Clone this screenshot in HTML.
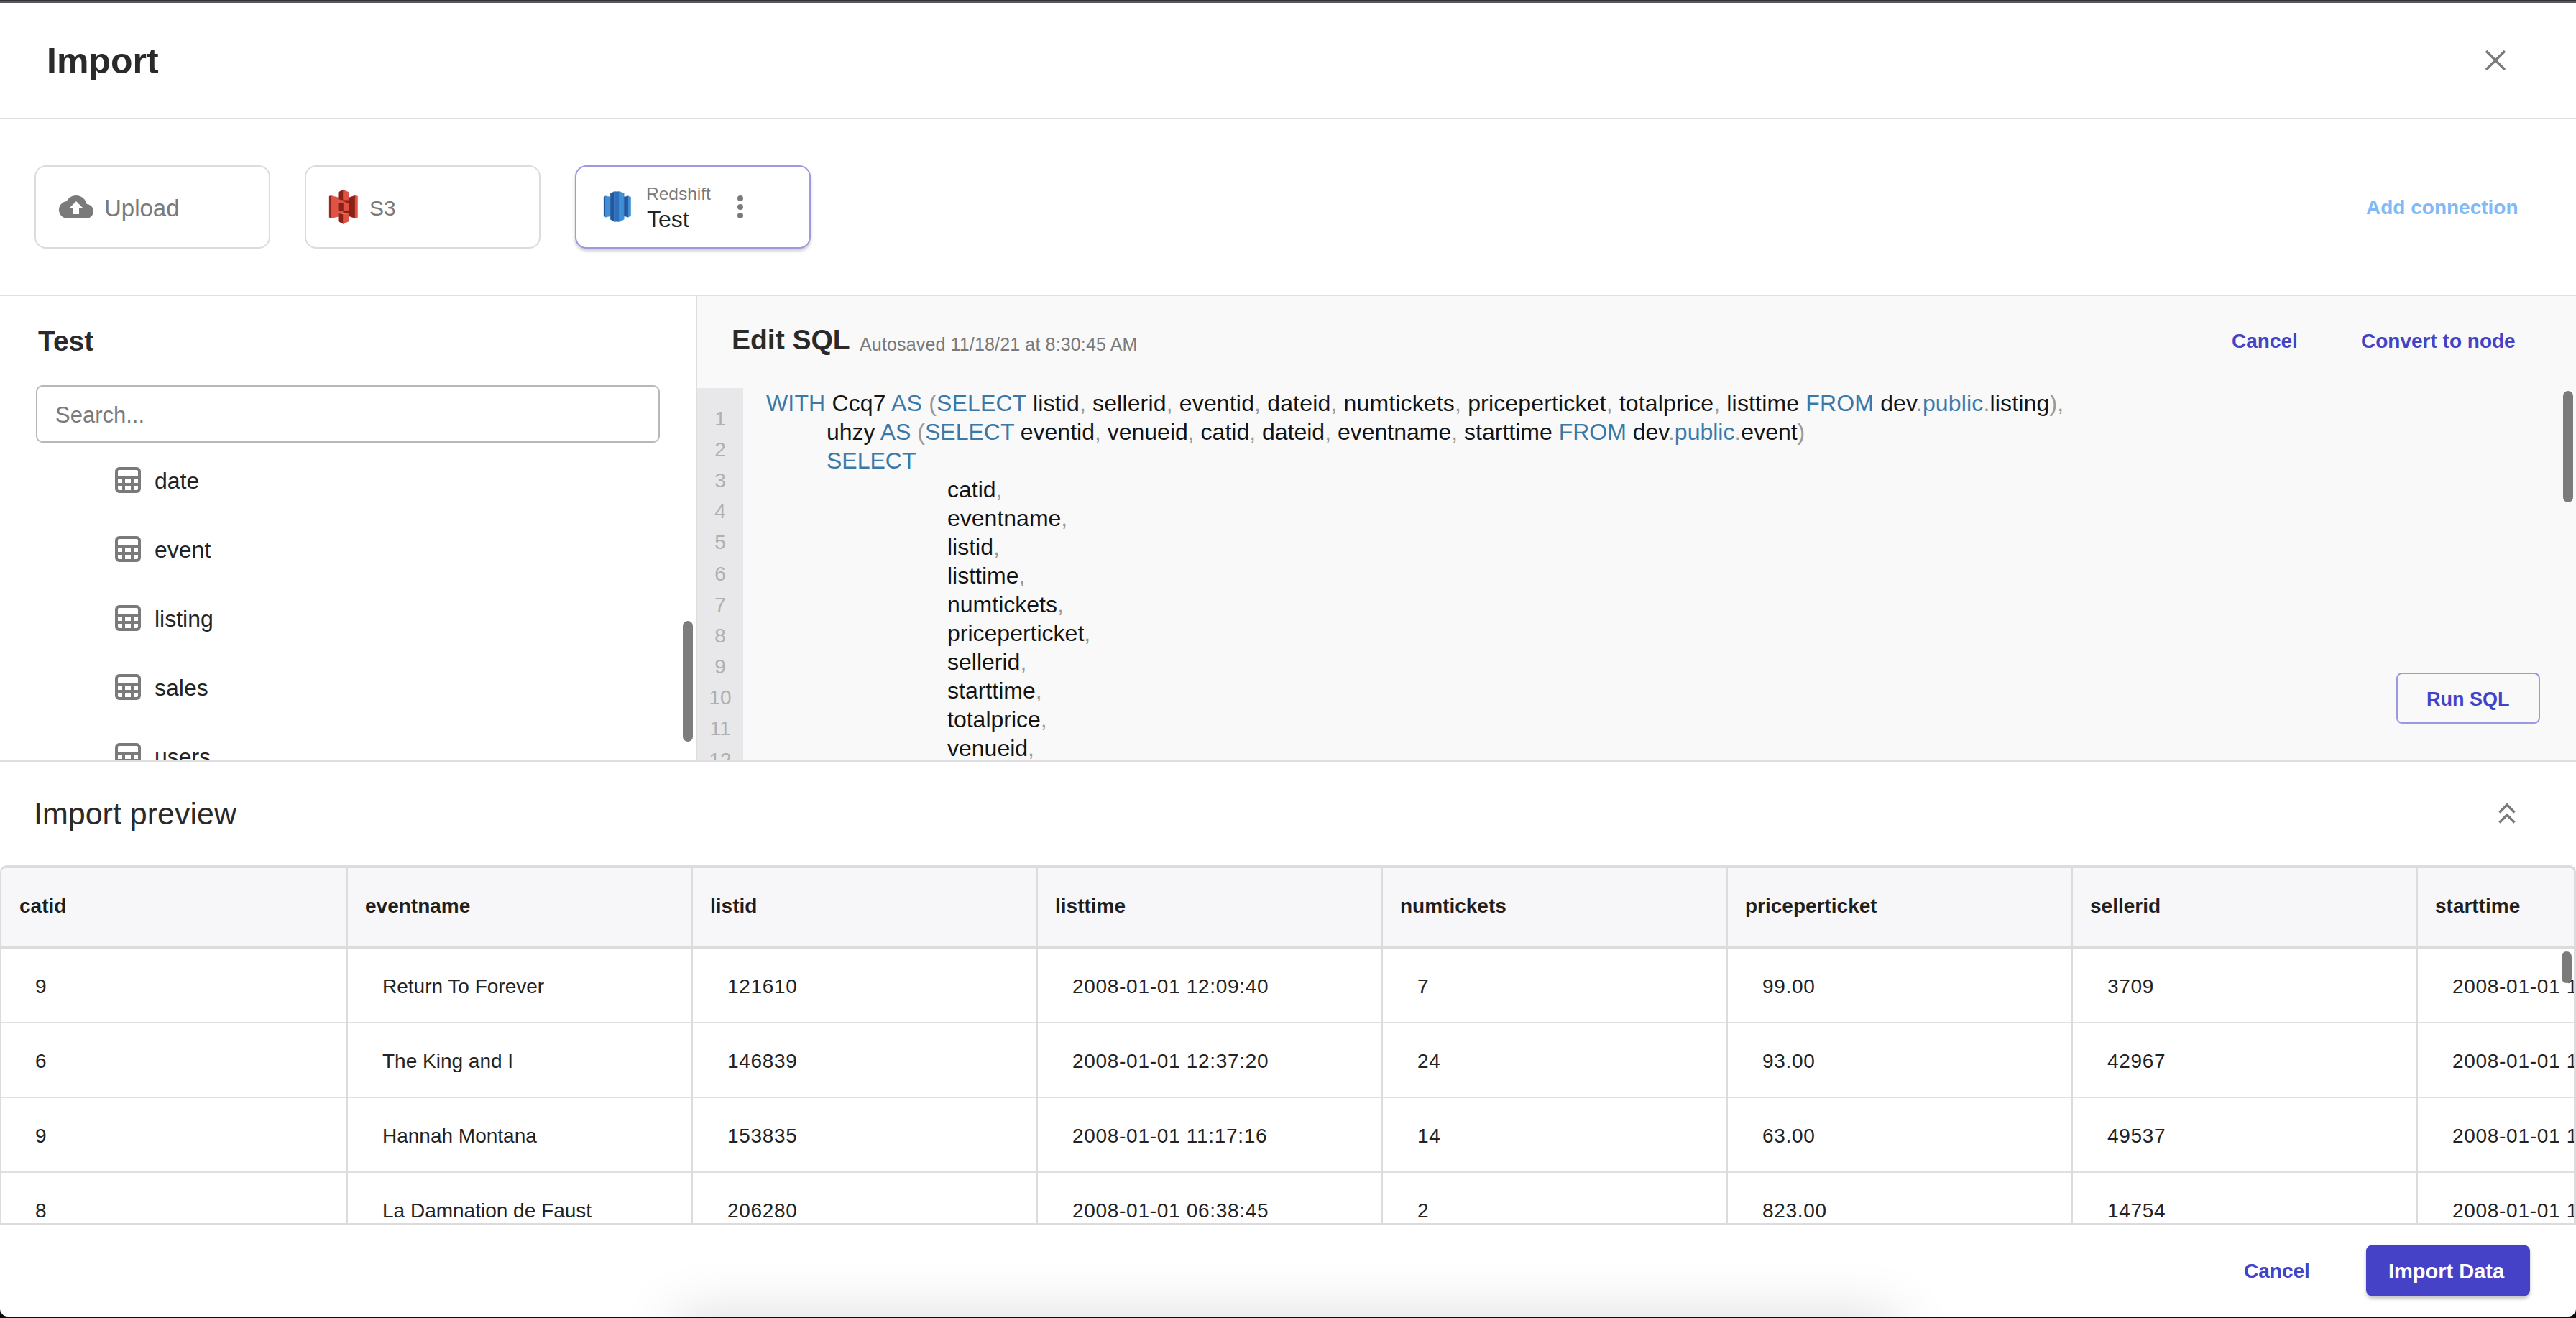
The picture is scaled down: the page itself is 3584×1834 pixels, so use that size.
<!DOCTYPE html>
<html><head><meta charset="utf-8"><style>
html,body{margin:0;padding:0;width:3584px;height:1834px;overflow:hidden;background:#fff;font-family:"Liberation Sans", sans-serif}
.r{position:absolute}
.t{position:absolute;white-space:pre;font-family:"Liberation Sans", sans-serif}
</style></head><body>
<div class="r" style="left:0px;top:0px;width:3584px;height:2px;background:#333438"></div>
<div class="r" style="left:0px;top:2px;width:3584px;height:2px;background:#595a5f"></div>
<div class="r" style="left:0px;top:1822px;width:3584px;height:12px;background:#0b0c10"></div>
<div class="r" style="left:0px;top:1790px;width:3584px;height:42px;background:#fff;border-radius:0 0 11px 11px"></div>
<div class="r" style="left:0;top:1690px;width:3584px;height:142px;overflow:hidden;border-radius:0 0 11px 11px"><div class="r" style="left:935px;top:144px;width:1710px;height:60px;border-radius:30px;box-shadow:0 0 80px rgba(0,0,0,0.17)"></div></div>
<div class="t" style="left:65px;top:60px;font-size:50px;line-height:50px;font-weight:700;color:#2a2a2a;">Import</div>
<svg class="r" style="left:3454px;top:66px" width="36" height="36" viewBox="0 0 36 36"><path d="M5 5L31 31M31 5L5 31" stroke="#7a7a7a" stroke-width="3.6" stroke-linecap="butt"/></svg>
<div class="r" style="left:0px;top:164px;width:3584px;height:2px;background:#e0e0e0"></div>
<div class="r" style="left:48px;top:230px;width:328px;height:116px;border:2px solid #dcdcdc;border-radius:16px;box-sizing:border-box;background:#fff"></div>
<svg class="r" style="left:82px;top:264px" width="48" height="48" viewBox="0 0 24 24"><path fill="#7a7a7a" d="M19.35 10.04C18.67 6.59 15.64 4 12 4 9.11 4 6.6 5.64 5.35 8.04 2.34 8.36 0 10.91 0 14c0 3.31 2.69 6 6 6h13c2.76 0 5-2.24 5-5 0-2.64-2.05-4.78-4.65-4.96zM14 13v4h-4v-4H7l5-5 5 5h-3z"/></svg>
<div class="t" style="left:145px;top:273px;font-size:33px;line-height:33px;font-weight:400;color:#7a7a7a;">Upload</div>
<div class="r" style="left:424px;top:230px;width:328px;height:116px;border:2px solid #dcdcdc;border-radius:16px;box-sizing:border-box;background:#fff"></div>
<svg class="r" style="left:450px;top:258px" width="56" height="58" viewBox="0 0 56 58">
<polygon fill="#8a2116" stroke="#8a2116" stroke-width="0.35" points="8.1,15 10.8,14.3 10.8,45.8 8.1,44.6"/>
<polygon fill="#e05243" stroke="#e05243" stroke-width="0.35" points="10.8,14.3 20.7,16.7 20.7,43.5 10.8,45.8"/>
<polygon fill="#8a2116" stroke="#8a2116" stroke-width="0.35" points="35.2,17 44,14.1 44,45.8 35.2,42.7"/>
<polygon fill="#e05243" stroke="#e05243" stroke-width="0.35" points="44,14.1 47.6,15 47.6,44.6 44,45.8"/>
<polygon fill="#e05243" stroke="#e05243" stroke-width="0.35" points="20.7,19.6 35.2,19.6 35.2,38.8 20.7,38.8"/>
<polygon fill="#8a2116" stroke="#8a2116" stroke-width="0.35" points="20.7,24.6 27.7,24.6 27.7,35.2 20.7,35.2"/>
<polygon fill="#8a2116" stroke="#8a2116" stroke-width="0.35" points="27.7,19.8 35.2,20.5 35.2,24.6 27.7,22"/>
<polygon fill="#8a2116" stroke="#8a2116" stroke-width="0.35" points="27.7,35.2 35.2,35.2 35.2,38.8 27.7,38.8"/>
<polygon fill="#8a2116" stroke="#8a2116" stroke-width="0.35" points="20.7,9.5 27.7,5.9 27.7,20.2 20.7,19.4"/>
<polygon fill="#e05243" stroke="#e05243" stroke-width="0.35" points="27.7,5.9 35.2,9.5 35.2,20.2 27.7,20.2"/>
<polygon fill="#e88a7e" points="20.7,38.6 35.2,38.6 27.7,40.4"/>
<polygon fill="#8a2116" stroke="#8a2116" stroke-width="0.35" points="20.7,38.8 27.7,40.2 27.7,53.6 20.7,50"/>
<polygon fill="#e05243" stroke="#e05243" stroke-width="0.35" points="27.7,40.2 35.2,38.8 35.2,50 27.7,53.6"/>
</svg>
<div class="t" style="left:514px;top:275px;font-size:30px;line-height:30px;font-weight:400;color:#7a7a7a;">S3</div>
<div class="r" style="left:800px;top:230px;width:328px;height:116px;border:2px solid #9c98e2;border-radius:16px;box-sizing:border-box;background:#fff;box-shadow:0 3px 4px rgba(0,0,0,0.22)"></div>
<svg class="r" style="left:832px;top:260px" width="56" height="56" viewBox="0 0 56 56">
<polygon fill="#2058a0" stroke="#2058a0" stroke-width="0.35" points="8.1,14.3 10.6,12.7 10.6,42.3 8.1,40.3"/>
<polygon fill="#3f8fd4" stroke="#3f8fd4" stroke-width="0.35" points="10.6,12.7 17.3,14 17.3,40.8 10.6,42.3"/>
<polygon fill="#2058a0" stroke="#2058a0" stroke-width="0.35" points="17.2,9.3 22.5,6.6 22.5,48.4 17.2,45.3"/>
<polygon fill="#2d6fbd" stroke="#2d6fbd" stroke-width="0.35" points="22.5,6.6 29.8,6.6 29.8,48.4 22.5,48.4"/>
<polygon fill="#3f8fd4" stroke="#3f8fd4" stroke-width="0.35" points="29.7,6.6 30.3,6.6 36.3,9.3 36.3,45.3 30.3,48.4 29.7,48.4"/>
<polygon fill="#2058a0" stroke="#2058a0" stroke-width="0.35" points="36.2,14 42,12.7 42,42.3 36.2,40.8"/>
<polygon fill="#3f8fd4" stroke="#3f8fd4" stroke-width="0.35" points="42,12.7 45.7,14.3 45.7,40.3 42,42.3"/>
</svg>
<div class="t" style="left:899px;top:258px;font-size:24.5px;line-height:24.5px;font-weight:400;color:#7a7a7a;">Redshift</div>
<div class="t" style="left:900px;top:289px;font-size:32px;line-height:32px;font-weight:400;color:#232323;">Test</div>
<div class="r" style="left:1026px;top:272px;width:8px;height:8px;background:#7a7a7a;border-radius:50%"></div>
<div class="r" style="left:1026px;top:284px;width:8px;height:8px;background:#7a7a7a;border-radius:50%"></div>
<div class="r" style="left:1026px;top:296px;width:8px;height:8px;background:#7a7a7a;border-radius:50%"></div>
<div class="t" style="left:3292px;top:275px;font-size:28px;line-height:28px;font-weight:700;color:#80b9f6;">Add connection</div>
<div class="r" style="left:0px;top:410px;width:3584px;height:2px;background:#e0e0e0"></div>
<div class="t" style="left:53px;top:455px;font-size:39px;line-height:39px;font-weight:700;color:#2a2a2a;">Test</div>
<div class="r" style="left:50px;top:536px;width:868px;height:80px;border:2px solid #b8b8b8;border-radius:9px;box-sizing:border-box;background:#fff"></div>
<div class="t" style="left:77px;top:562px;font-size:31px;line-height:31px;font-weight:400;color:#7a7a7a;">Search...</div>
<div class="r" style="left:0;top:412px;width:968px;height:646px;overflow:hidden">
<div class="r" style="left:160px;top:238px;width:36px;height:36px"><svg width="36" height="36" viewBox="0 0 36 36"><rect x="2" y="2" width="32" height="32" rx="4" fill="none" stroke="#7a7a7a" stroke-width="4"/><rect x="2" y="12" width="32" height="4" fill="#7a7a7a"/><rect x="2" y="22" width="32" height="4" fill="#7a7a7a"/><rect x="10" y="12" width="4" height="22" fill="#7a7a7a"/><rect x="22" y="12" width="4" height="22" fill="#7a7a7a"/></svg></div>
<div class="t" style="left:215px;top:241px;font-size:32px;line-height:32px;color:#232323">date</div>
<div class="r" style="left:160px;top:334px;width:36px;height:36px"><svg width="36" height="36" viewBox="0 0 36 36"><rect x="2" y="2" width="32" height="32" rx="4" fill="none" stroke="#7a7a7a" stroke-width="4"/><rect x="2" y="12" width="32" height="4" fill="#7a7a7a"/><rect x="2" y="22" width="32" height="4" fill="#7a7a7a"/><rect x="10" y="12" width="4" height="22" fill="#7a7a7a"/><rect x="22" y="12" width="4" height="22" fill="#7a7a7a"/></svg></div>
<div class="t" style="left:215px;top:337px;font-size:32px;line-height:32px;color:#232323">event</div>
<div class="r" style="left:160px;top:430px;width:36px;height:36px"><svg width="36" height="36" viewBox="0 0 36 36"><rect x="2" y="2" width="32" height="32" rx="4" fill="none" stroke="#7a7a7a" stroke-width="4"/><rect x="2" y="12" width="32" height="4" fill="#7a7a7a"/><rect x="2" y="22" width="32" height="4" fill="#7a7a7a"/><rect x="10" y="12" width="4" height="22" fill="#7a7a7a"/><rect x="22" y="12" width="4" height="22" fill="#7a7a7a"/></svg></div>
<div class="t" style="left:215px;top:433px;font-size:32px;line-height:32px;color:#232323">listing</div>
<div class="r" style="left:160px;top:526px;width:36px;height:36px"><svg width="36" height="36" viewBox="0 0 36 36"><rect x="2" y="2" width="32" height="32" rx="4" fill="none" stroke="#7a7a7a" stroke-width="4"/><rect x="2" y="12" width="32" height="4" fill="#7a7a7a"/><rect x="2" y="22" width="32" height="4" fill="#7a7a7a"/><rect x="10" y="12" width="4" height="22" fill="#7a7a7a"/><rect x="22" y="12" width="4" height="22" fill="#7a7a7a"/></svg></div>
<div class="t" style="left:215px;top:529px;font-size:32px;line-height:32px;color:#232323">sales</div>
<div class="r" style="left:160px;top:622px;width:36px;height:36px"><svg width="36" height="36" viewBox="0 0 36 36"><rect x="2" y="2" width="32" height="32" rx="4" fill="none" stroke="#7a7a7a" stroke-width="4"/><rect x="2" y="12" width="32" height="4" fill="#7a7a7a"/><rect x="2" y="22" width="32" height="4" fill="#7a7a7a"/><rect x="10" y="12" width="4" height="22" fill="#7a7a7a"/><rect x="22" y="12" width="4" height="22" fill="#7a7a7a"/></svg></div>
<div class="t" style="left:215px;top:625px;font-size:32px;line-height:32px;color:#232323">users</div>
</div>
<div class="r" style="left:950px;top:864px;width:14px;height:168px;background:#7d7d7d;border-radius:7px"></div>
<div class="r" style="left:970px;top:412px;width:2614px;height:646px;background:#f9f9f9"></div>
<div class="r" style="left:968px;top:412px;width:2px;height:646px;background:#dedede"></div>
<div class="t" style="left:1018px;top:453px;font-size:39px;line-height:39px;font-weight:700;color:#2a2a2a;">Edit SQL</div>
<div class="t" style="left:1196px;top:467px;font-size:25px;line-height:25px;font-weight:400;color:#7a7a7a;letter-spacing:0.15px">Autosaved 11/18/21 at 8:30:45 AM</div>
<div class="t" style="left:3105px;top:461px;font-size:28px;line-height:28px;font-weight:700;color:#4343c6;">Cancel</div>
<div class="t" style="left:3285px;top:461px;font-size:28px;line-height:28px;font-weight:700;color:#4343c6;">Convert to node</div>
<div class="r" style="left:970px;top:540px;width:64px;height:518px;background:#e8e8ea"></div>
<div class="r" style="left:970px;top:540px;width:64px;height:518px;overflow:hidden">
<div class="t" style="left:0;width:64px;text-align:center;top:29px;font-size:28px;line-height:28px;color:#b0b0b0">1</div>
<div class="t" style="left:0;width:64px;text-align:center;top:72px;font-size:28px;line-height:28px;color:#b0b0b0">2</div>
<div class="t" style="left:0;width:64px;text-align:center;top:115px;font-size:28px;line-height:28px;color:#b0b0b0">3</div>
<div class="t" style="left:0;width:64px;text-align:center;top:158px;font-size:28px;line-height:28px;color:#b0b0b0">4</div>
<div class="t" style="left:0;width:64px;text-align:center;top:201px;font-size:28px;line-height:28px;color:#b0b0b0">5</div>
<div class="t" style="left:0;width:64px;text-align:center;top:245px;font-size:28px;line-height:28px;color:#b0b0b0">6</div>
<div class="t" style="left:0;width:64px;text-align:center;top:288px;font-size:28px;line-height:28px;color:#b0b0b0">7</div>
<div class="t" style="left:0;width:64px;text-align:center;top:331px;font-size:28px;line-height:28px;color:#b0b0b0">8</div>
<div class="t" style="left:0;width:64px;text-align:center;top:374px;font-size:28px;line-height:28px;color:#b0b0b0">9</div>
<div class="t" style="left:0;width:64px;text-align:center;top:417px;font-size:28px;line-height:28px;color:#b0b0b0">10</div>
<div class="t" style="left:0;width:64px;text-align:center;top:460px;font-size:28px;line-height:28px;color:#b0b0b0">11</div>
<div class="t" style="left:0;width:64px;text-align:center;top:504px;font-size:28px;line-height:28px;color:#b0b0b0">12</div>
</div>
<div class="r" style="left:1034px;top:540px;width:2530px;height:518px;overflow:hidden">
<div class="t" style="left:32px;top:5px;font-size:32px;line-height:32px;color:#141414;letter-spacing:0.16px"><span style="color:#3a78a8">WITH</span> Ccq7 <span style="color:#3a78a8">AS</span> <span style="color:#9a9a9a">(</span><span style="color:#3a78a8">SELECT</span> listid<span style="color:#9a9a9a">,</span> sellerid<span style="color:#9a9a9a">,</span> eventid<span style="color:#9a9a9a">,</span> dateid<span style="color:#9a9a9a">,</span> numtickets<span style="color:#9a9a9a">,</span> priceperticket<span style="color:#9a9a9a">,</span> totalprice<span style="color:#9a9a9a">,</span> listtime <span style="color:#3a78a8">FROM</span> dev<span style="color:#9a9a9a">.</span><span style="color:#3a78a8">public</span><span style="color:#9a9a9a">.</span>listing<span style="color:#9a9a9a">),</span></div>
<div class="t" style="left:116px;top:45px;font-size:32px;line-height:32px;color:#141414;letter-spacing:0">uhzy <span style="color:#3a78a8">AS</span> <span style="color:#9a9a9a">(</span><span style="color:#3a78a8">SELECT</span> eventid<span style="color:#9a9a9a">,</span> venueid<span style="color:#9a9a9a">,</span> catid<span style="color:#9a9a9a">,</span> dateid<span style="color:#9a9a9a">,</span> eventname<span style="color:#9a9a9a">,</span> starttime <span style="color:#3a78a8">FROM</span> dev<span style="color:#9a9a9a">.</span><span style="color:#3a78a8">public</span><span style="color:#9a9a9a">.</span>event<span style="color:#9a9a9a">)</span></div>
<div class="t" style="left:116px;top:85px;font-size:32px;line-height:32px;color:#141414;letter-spacing:0"><span style="color:#3a78a8">SELECT</span></div>
<div class="t" style="left:284px;top:125px;font-size:32px;line-height:32px;color:#141414;letter-spacing:0">catid<span style="color:#9a9a9a">,</span></div>
<div class="t" style="left:284px;top:165px;font-size:32px;line-height:32px;color:#141414;letter-spacing:0">eventname<span style="color:#9a9a9a">,</span></div>
<div class="t" style="left:284px;top:205px;font-size:32px;line-height:32px;color:#141414;letter-spacing:0">listid<span style="color:#9a9a9a">,</span></div>
<div class="t" style="left:284px;top:245px;font-size:32px;line-height:32px;color:#141414;letter-spacing:0">listtime<span style="color:#9a9a9a">,</span></div>
<div class="t" style="left:284px;top:285px;font-size:32px;line-height:32px;color:#141414;letter-spacing:0">numtickets<span style="color:#9a9a9a">,</span></div>
<div class="t" style="left:284px;top:325px;font-size:32px;line-height:32px;color:#141414;letter-spacing:0">priceperticket<span style="color:#9a9a9a">,</span></div>
<div class="t" style="left:284px;top:365px;font-size:32px;line-height:32px;color:#141414;letter-spacing:0">sellerid<span style="color:#9a9a9a">,</span></div>
<div class="t" style="left:284px;top:405px;font-size:32px;line-height:32px;color:#141414;letter-spacing:0">starttime<span style="color:#9a9a9a">,</span></div>
<div class="t" style="left:284px;top:445px;font-size:32px;line-height:32px;color:#141414;letter-spacing:0">totalprice<span style="color:#9a9a9a">,</span></div>
<div class="t" style="left:284px;top:485px;font-size:32px;line-height:32px;color:#141414;letter-spacing:0">venueid<span style="color:#9a9a9a">,</span></div>
<div class="t" style="left:284px;top:525px;font-size:32px;line-height:32px;color:#141414;letter-spacing:0">eventid<span style="color:#9a9a9a">,</span></div>
</div>
<div class="r" style="left:3566px;top:544px;width:14px;height:155px;background:#7b7b7b;border-radius:7px"></div>
<div class="r" style="left:3334px;top:936px;width:200px;height:71px;border:2px solid #9c98e2;border-radius:8px;box-sizing:border-box"></div>
<div class="t" style="left:3376px;top:960px;font-size:27px;line-height:27px;font-weight:700;color:#4343c6;">Run SQL</div>
<div class="r" style="left:0px;top:1058px;width:3584px;height:2px;background:#dedede"></div>
<div class="t" style="left:47px;top:1111px;font-size:43px;line-height:43px;font-weight:400;color:#2a2a2a;">Import preview</div>
<svg class="r" style="left:3472px;top:1114px" width="32" height="36" viewBox="0 0 32 36"><path d="M5.5 16.5L16 6L26.5 16.5M5.5 30.5L16 20L26.5 30.5" fill="none" stroke="#7a7a7a" stroke-width="3.6"/></svg>
<div class="r" style="left:0;top:1204px;width:3584px;height:500px;border:solid #dcdcdf;border-width:4px 3px 2px 2px;border-radius:9px 9px 0 0;box-sizing:border-box;overflow:hidden;background:#fff">
<div class="r" style="left:0;top:0;width:3584px;height:108px;background:#f7f7f9"></div>
<div class="r" style="left:0;top:108px;width:3584px;height:4px;background:#dcdcdf"></div>
<div class="r" style="left:0;top:214px;width:3584px;height:2px;background:#e0e0e3"></div>
<div class="r" style="left:0;top:318px;width:3584px;height:2px;background:#e0e0e3"></div>
<div class="r" style="left:0;top:422px;width:3584px;height:2px;background:#e0e0e3"></div>
<div class="r" style="left:480px;top:0;width:2px;height:500px;background:#dcdcdf"></div>
<div class="r" style="left:960px;top:0;width:2px;height:500px;background:#dcdcdf"></div>
<div class="r" style="left:1440px;top:0;width:2px;height:500px;background:#dcdcdf"></div>
<div class="r" style="left:1920px;top:0;width:2px;height:500px;background:#dcdcdf"></div>
<div class="r" style="left:2400px;top:0;width:2px;height:500px;background:#dcdcdf"></div>
<div class="r" style="left:2880px;top:0;width:2px;height:500px;background:#dcdcdf"></div>
<div class="r" style="left:3360px;top:0;width:2px;height:500px;background:#dcdcdf"></div>
<div class="t" style="left:25px;top:39px;font-size:28px;line-height:28px;font-weight:700;color:#1f1f1f">catid</div>
<div class="t" style="left:47px;top:151px;font-size:28px;line-height:28px;color:#232323;letter-spacing:0.7px">9</div>
<div class="t" style="left:47px;top:255px;font-size:28px;line-height:28px;color:#232323;letter-spacing:0.7px">6</div>
<div class="t" style="left:47px;top:359px;font-size:28px;line-height:28px;color:#232323;letter-spacing:0.7px">9</div>
<div class="t" style="left:47px;top:463px;font-size:28px;line-height:28px;color:#232323;letter-spacing:0.7px">8</div>
<div class="t" style="left:506px;top:39px;font-size:28px;line-height:28px;font-weight:700;color:#1f1f1f">eventname</div>
<div class="t" style="left:530px;top:151px;font-size:28px;line-height:28px;color:#232323;letter-spacing:0">Return To Forever</div>
<div class="t" style="left:530px;top:255px;font-size:28px;line-height:28px;color:#232323;letter-spacing:0">The King and I</div>
<div class="t" style="left:530px;top:359px;font-size:28px;line-height:28px;color:#232323;letter-spacing:0">Hannah Montana</div>
<div class="t" style="left:530px;top:463px;font-size:28px;line-height:28px;color:#232323;letter-spacing:0">La Damnation de Faust</div>
<div class="t" style="left:986px;top:39px;font-size:28px;line-height:28px;font-weight:700;color:#1f1f1f">listid</div>
<div class="t" style="left:1010px;top:151px;font-size:28px;line-height:28px;color:#232323;letter-spacing:0.7px">121610</div>
<div class="t" style="left:1010px;top:255px;font-size:28px;line-height:28px;color:#232323;letter-spacing:0.7px">146839</div>
<div class="t" style="left:1010px;top:359px;font-size:28px;line-height:28px;color:#232323;letter-spacing:0.7px">153835</div>
<div class="t" style="left:1010px;top:463px;font-size:28px;line-height:28px;color:#232323;letter-spacing:0.7px">206280</div>
<div class="t" style="left:1466px;top:39px;font-size:28px;line-height:28px;font-weight:700;color:#1f1f1f">listtime</div>
<div class="t" style="left:1490px;top:151px;font-size:28px;line-height:28px;color:#232323;letter-spacing:0.7px">2008-01-01 12:09:40</div>
<div class="t" style="left:1490px;top:255px;font-size:28px;line-height:28px;color:#232323;letter-spacing:0.7px">2008-01-01 12:37:20</div>
<div class="t" style="left:1490px;top:359px;font-size:28px;line-height:28px;color:#232323;letter-spacing:0.7px">2008-01-01 11:17:16</div>
<div class="t" style="left:1490px;top:463px;font-size:28px;line-height:28px;color:#232323;letter-spacing:0.7px">2008-01-01 06:38:45</div>
<div class="t" style="left:1946px;top:39px;font-size:28px;line-height:28px;font-weight:700;color:#1f1f1f">numtickets</div>
<div class="t" style="left:1970px;top:151px;font-size:28px;line-height:28px;color:#232323;letter-spacing:0.7px">7</div>
<div class="t" style="left:1970px;top:255px;font-size:28px;line-height:28px;color:#232323;letter-spacing:0.7px">24</div>
<div class="t" style="left:1970px;top:359px;font-size:28px;line-height:28px;color:#232323;letter-spacing:0.7px">14</div>
<div class="t" style="left:1970px;top:463px;font-size:28px;line-height:28px;color:#232323;letter-spacing:0.7px">2</div>
<div class="t" style="left:2426px;top:39px;font-size:28px;line-height:28px;font-weight:700;color:#1f1f1f">priceperticket</div>
<div class="t" style="left:2450px;top:151px;font-size:28px;line-height:28px;color:#232323;letter-spacing:0.7px">99.00</div>
<div class="t" style="left:2450px;top:255px;font-size:28px;line-height:28px;color:#232323;letter-spacing:0.7px">93.00</div>
<div class="t" style="left:2450px;top:359px;font-size:28px;line-height:28px;color:#232323;letter-spacing:0.7px">63.00</div>
<div class="t" style="left:2450px;top:463px;font-size:28px;line-height:28px;color:#232323;letter-spacing:0.7px">823.00</div>
<div class="t" style="left:2906px;top:39px;font-size:28px;line-height:28px;font-weight:700;color:#1f1f1f">sellerid</div>
<div class="t" style="left:2930px;top:151px;font-size:28px;line-height:28px;color:#232323;letter-spacing:0.7px">3709</div>
<div class="t" style="left:2930px;top:255px;font-size:28px;line-height:28px;color:#232323;letter-spacing:0.7px">42967</div>
<div class="t" style="left:2930px;top:359px;font-size:28px;line-height:28px;color:#232323;letter-spacing:0.7px">49537</div>
<div class="t" style="left:2930px;top:463px;font-size:28px;line-height:28px;color:#232323;letter-spacing:0.7px">14754</div>
<div class="t" style="left:3386px;top:39px;font-size:28px;line-height:28px;font-weight:700;color:#1f1f1f">starttime</div>
<div class="t" style="left:3410px;top:151px;font-size:28px;line-height:28px;color:#232323;letter-spacing:0.7px">2008-01-01 19:30:00</div>
<div class="t" style="left:3410px;top:255px;font-size:28px;line-height:28px;color:#232323;letter-spacing:0.7px">2008-01-01 14:30:00</div>
<div class="t" style="left:3410px;top:359px;font-size:28px;line-height:28px;color:#232323;letter-spacing:0.7px">2008-01-01 19:00:00</div>
<div class="t" style="left:3410px;top:463px;font-size:28px;line-height:28px;color:#232323;letter-spacing:0.7px">2008-01-01 14:30:00</div>
</div>
<div class="r" style="left:3564px;top:1324px;width:14px;height:44px;background:#7b7b7b;border-radius:7px"></div>
<div class="t" style="left:3122px;top:1755px;font-size:28px;line-height:28px;font-weight:700;color:#4343c8;">Cancel</div>
<div class="r" style="left:3292px;top:1732px;width:228px;height:72px;background:#4642c8;border-radius:9px;box-shadow:0 3px 5px rgba(0,0,0,0.25)"></div>
<div class="t" style="left:3323px;top:1755px;font-size:29px;line-height:29px;font-weight:700;color:#ffffff;">Import Data</div>
</body></html>
